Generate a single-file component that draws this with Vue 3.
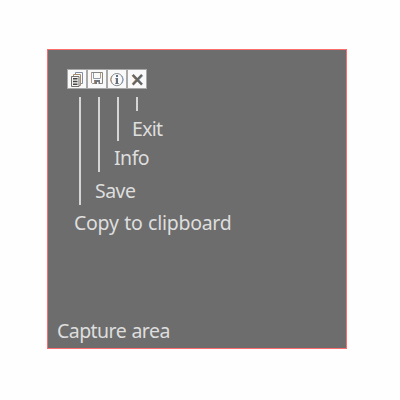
<script setup>
const callouts = [
  { id: 'exit', text: 'Exit', x: 132, y: 116, lineX: 136, lineHeight: 14 },
  { id: 'info', text: 'Info', x: 114, y: 145, lineX: 117, lineHeight: 44 },
  { id: 'save', text: 'Save', x: 95, y: 178, lineX: 98, lineHeight: 75 },
  { id: 'copy', text: 'Copy to clipboard', x: 74, y: 210, lineX: 79, lineHeight: 108 },
]
</script>

<template>
  <main class="page">
    <section class="capture">
      <div class="toolbar">
        <button class="tool" aria-label="Copy to clipboard">
          <svg width="18" height="18" viewBox="0 0 18 18" fill="none">
            <path d="M7.5 4V2.5h7v11h-1.5" stroke="#7f8da3" />
            <path d="M5.5 6V4.5h7v11h-1.5" stroke="#a58e70" />
            <path d="M3.5 6.5h7.5v10H3.5z" fill="#f4f4f2" stroke="#73706c" />
            <path d="M5 8.7h4.5M5 11.5h4.5M5 14.3h4.5" stroke="#454545" stroke-width="1.5" />
          </svg>
        </button>
        <button class="tool" aria-label="Save">
          <svg width="18" height="18" viewBox="0 0 18 18" fill="none">
            <path d="M3.5 2.5h11v11h-10l-1-1z" stroke="#858581" />
            <path d="M3.5 2.5v10M12.5 3v5" stroke="#b79c80" />
            <path d="M5.5 3v5.5h7" stroke="#8e9bad" />
            <path d="M6 10h6v4H6z" fill="#72777d" />
            <path d="M6 10.5h1V14H6z" fill="#b08a62" />
            <path d="M9 12h1.5v2H9z" fill="#f4f4f4" />
          </svg>
        </button>
        <button class="tool" aria-label="Info">
          <svg width="18" height="18" viewBox="0 0 18 18" fill="none">
            <circle cx="8.9" cy="9.6" r="6.1" stroke="#858b90" />
            <path d="M4 5.9Q1.6 9.6 4 13.3" stroke="#b49375" />
            <path d="M13.8 5.9q2.4 3.7 0 7.4" stroke="#7e9ab8" />
            <path d="M8 5h2v2H8zM7.5 8H10v5h.7v1H7.3v-1H8V9h-.5z" fill="#5c6f84" />
            <path d="M8.3 8.5v4.5" stroke="#8b6856" stroke-width=".7" />
          </svg>
        </button>
        <button class="tool" aria-label="Exit">
          <svg width="18" height="18" viewBox="0 0 18 18" fill="none">
            <path d="m4.7 4.9 9.3 9.8m0-9.8-9.3 9.8" stroke="#666460" stroke-width="2.4" />
            <path d="m4.1 5.7 3.6 4.1-3.6 4.1" stroke="#a17c55" stroke-width=".7" />
            <path d="m14.7 5.7-3.7 4.1 3.7 4.1" stroke="#718eaa" stroke-width=".6" />
          </svg>
        </button>
      </div>
      <div class="caption">Capture area</div>
    </section>
    <template v-for="c in callouts" :key="c.id">
      <i class="leader" :style="{ left: c.lineX + 'px', height: c.lineHeight + 'px' }"></i>
      <span class="label" :class="c.id" :style="{ left: c.x + 'px', top: c.y + 'px' }">{{ c.text }}</span>
    </template>
  </main>
</template>

<style>
body {
  margin: 0;
  background: #fefefe;
}
</style>

<style scoped>
.page {
  position: relative;
  box-sizing: border-box;
  width: 400px;
  height: 400px;
  padding: 49px 0 0 47px;
  background: #fefefe;
  font: 400 19.5px/26px "Noto Sans", "Open Sans", sans-serif;
  color: #dedede;
}
.capture {
  box-sizing: border-box;
  width: 300px;
  height: 300px;
  padding: 19px 9px 4px;
  display: flex;
  flex-direction: column;
  justify-content: space-between;
  background: #6d6d6d;
  border: 1px solid #fb6d6d;
}
.toolbar {
  display: flex;
  gap: 2px;
  align-self: flex-start;
  margin-left: 10px;
  padding: 1px;
  background: #a8a8a8;
}
.tool {
  display: block;
  width: 18px;
  height: 18px;
  padding: 0;
  border: 0;
  background: #f9f9f9;
}
.tool svg {
  display: block;
}
.caption,
.label {
  white-space: nowrap;
  letter-spacing: -0.55px;
}
.caption {
  word-spacing: 0.8px;
}
.leader {
  position: absolute;
  top: 97px;
  width: 2px;
  background: #d5d5d5;
}
.label {
  position: absolute;
}
.exit {
  letter-spacing: -0.7px;
}
.copy {
  letter-spacing: -0.27px;
  word-spacing: 0.8px;
}
.info {
  letter-spacing: -0.5px;
}
</style>
